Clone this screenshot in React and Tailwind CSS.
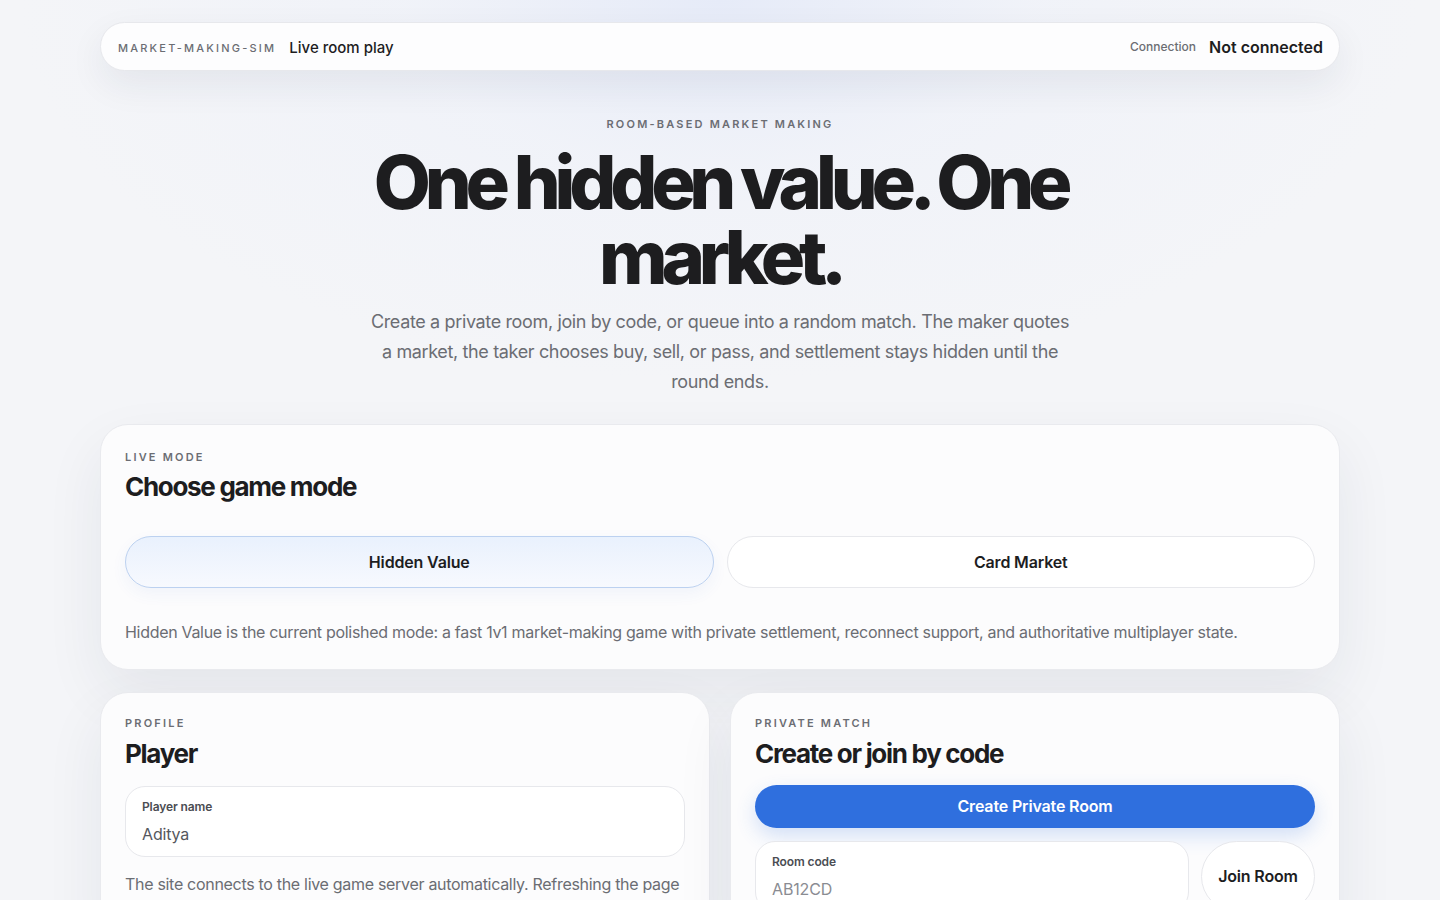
export default function App() {
  return (
    <div
      className="min-h-screen w-full bg-[#f4f5f8] text-[#1d1d1f]"
      style={{ fontFamily: 'Inter, "Noto Sans", sans-serif' }}
    >
      <div className="min-h-screen w-full bg-[radial-gradient(ellipse_700px_380px_at_50%_0%,#e6ebf8_0%,rgba(238,241,249,0.6)_45%,rgba(244,245,248,0)_100%)]">
        <div className="mx-auto w-[1240px] pt-[22px]">
          <header className="flex h-[49px] items-center justify-between rounded-full border border-[#e7e8ec] bg-[#fdfdfe] pl-[17px] pr-[16px] shadow-[0_14px_36px_rgba(30,40,70,0.07)]">
            <div className="mt-[3px] flex items-center gap-[13px]">
              <span className="text-[11px] font-medium uppercase tracking-[0.2em] text-[#6b6d73]">market-making-sim</span>
              <span className="text-[15px] font-medium text-[#1d1d1f]">Live room play</span>
            </div>
            <div className="flex items-center gap-[13px]">
              <span className="text-[12px] font-medium text-[#6b6d73]">Connection</span>
              <span className="text-[16px] font-semibold text-[#1d1d1f]">Not connected</span>
            </div>
          </header>

          <section className="flex flex-col items-center pt-[45px] text-center">
            <p className="text-[11px] font-semibold uppercase tracking-[0.2em] text-[#6b6d73]">Room-based market making</p>
            <h1 className="mt-[12px] w-[730px] text-[74px] font-extrabold leading-[75px] tracking-[-0.084em] text-[#1d1d1f]">
              One hidden value. One market.
            </h1>
            <p className="mt-[12px] w-[706px] text-[18px] leading-[30px] tracking-[-0.02em] text-[#6b6d73]">
              Create a private room, join by code, or queue into a random match. The maker quotes a market, the taker chooses buy, sell, or pass, and settlement stays hidden until the round ends.
            </p>
          </section>

          <section className="mt-[27px] rounded-[28px] border border-[#e9eaee] bg-[#fcfcfd] px-[24px] pb-[25px] pt-[24px] shadow-[0_24px_60px_rgba(30,40,70,0.07)]">
            <p className="text-[11px] font-semibold uppercase tracking-[0.2em] text-[#6b6d73]">Live mode</p>
            <h2 className="mt-[5px] text-[26px] font-bold leading-[34px] tracking-[-0.05em] text-[#1d1d1f]">Choose game mode</h2>
            <div className="mt-[32px] grid grid-cols-2 gap-[13px]">
              <button className="h-[52px] rounded-full border border-[#bcd1f0] bg-[linear-gradient(180deg,#e9f1fd_0%,#f7f9fe_100%)] text-[16px] font-semibold tracking-[-0.01em] text-[#1d1d1f] shadow-[0_6px_16px_rgba(50,100,200,0.06)]">
                Hidden Value
              </button>
              <button className="h-[52px] rounded-full border border-[#e7e8ec] bg-white text-[16px] font-semibold tracking-[-0.01em] text-[#1d1d1f]">
                Card Market
              </button>
            </div>
            <p className="mt-[32px] text-[16px] leading-[24px] tracking-[-0.019em] text-[#6b6d73]">
              Hidden Value is the current polished mode: a fast 1v1 market-making game with private settlement, reconnect support, and authoritative multiplayer state.
            </p>
          </section>

          <div className="mt-[22px] grid grid-cols-2 gap-[20px]">
            <section className="rounded-[28px] border border-[#e9eaee] bg-[#fcfcfd] px-[24px] pb-[26px] pt-[22px] shadow-[0_24px_60px_rgba(30,40,70,0.07)]">
              <p className="text-[11px] font-semibold uppercase tracking-[0.2em] text-[#6b6d73]">Profile</p>
              <h2 className="mt-[5px] text-[26px] font-bold leading-[34px] tracking-[-0.05em] text-[#1d1d1f]">Player</h2>
              <div className="mt-[15px] rounded-[20px] border border-[#e7e8ec] bg-white px-[16px] pb-[10px] pt-[12px]">
                <p className="text-[12px] font-semibold leading-[16px] tracking-[-0.01em] text-[#4b4d53]">Player name</p>
                <p className="mt-[7px] text-[16px] leading-[24px] tracking-[-0.01em] text-[#55575d]">Aditya</p>
              </div>
              <p className="mt-[15px] text-[16px] leading-[24px] tracking-[-0.019em] text-[#6b6d73]">
                The site connects to the live game server automatically. Refreshing the page keeps your seat while the room is open.
              </p>
            </section>
            <section className="rounded-[28px] border border-[#e9eaee] bg-[#fcfcfd] px-[24px] pb-[26px] pt-[22px] shadow-[0_24px_60px_rgba(30,40,70,0.07)]">
              <p className="text-[11px] font-semibold uppercase tracking-[0.2em] text-[#6b6d73]">Private match</p>
              <h2 className="mt-[5px] text-[26px] font-bold leading-[34px] tracking-[-0.05em] text-[#1d1d1f]">Create or join by code</h2>
              <button className="mt-[14px] h-[43px] w-full rounded-full bg-[#2f6fde] text-[16px] font-semibold tracking-[-0.01em] text-white shadow-[0_8px_20px_rgba(47,111,222,0.2)]">
                Create Private Room
              </button>
              <div className="mt-[13px] flex gap-[12px]">
                <div className="flex-1 rounded-[20px] border border-[#e7e8ec] bg-white px-[16px] pb-[10px] pt-[12px]">
                  <p className="text-[12px] font-semibold leading-[16px] tracking-[-0.01em] text-[#4b4d53]">Room code</p>
                  <p className="mt-[7px] text-[16px] leading-[24px] tracking-[-0.01em] text-[#8a8c92]">AB12CD</p>
                </div>
                <button className="w-[114px] rounded-full border border-[#e7e8ec] bg-white text-[16px] font-semibold tracking-[-0.01em] text-[#1d1d1f]">
                  Join Room
                </button>
              </div>
            </section>
          </div>
          <div className="h-[40px]" />
        </div>
      </div>
    </div>
  );
}
